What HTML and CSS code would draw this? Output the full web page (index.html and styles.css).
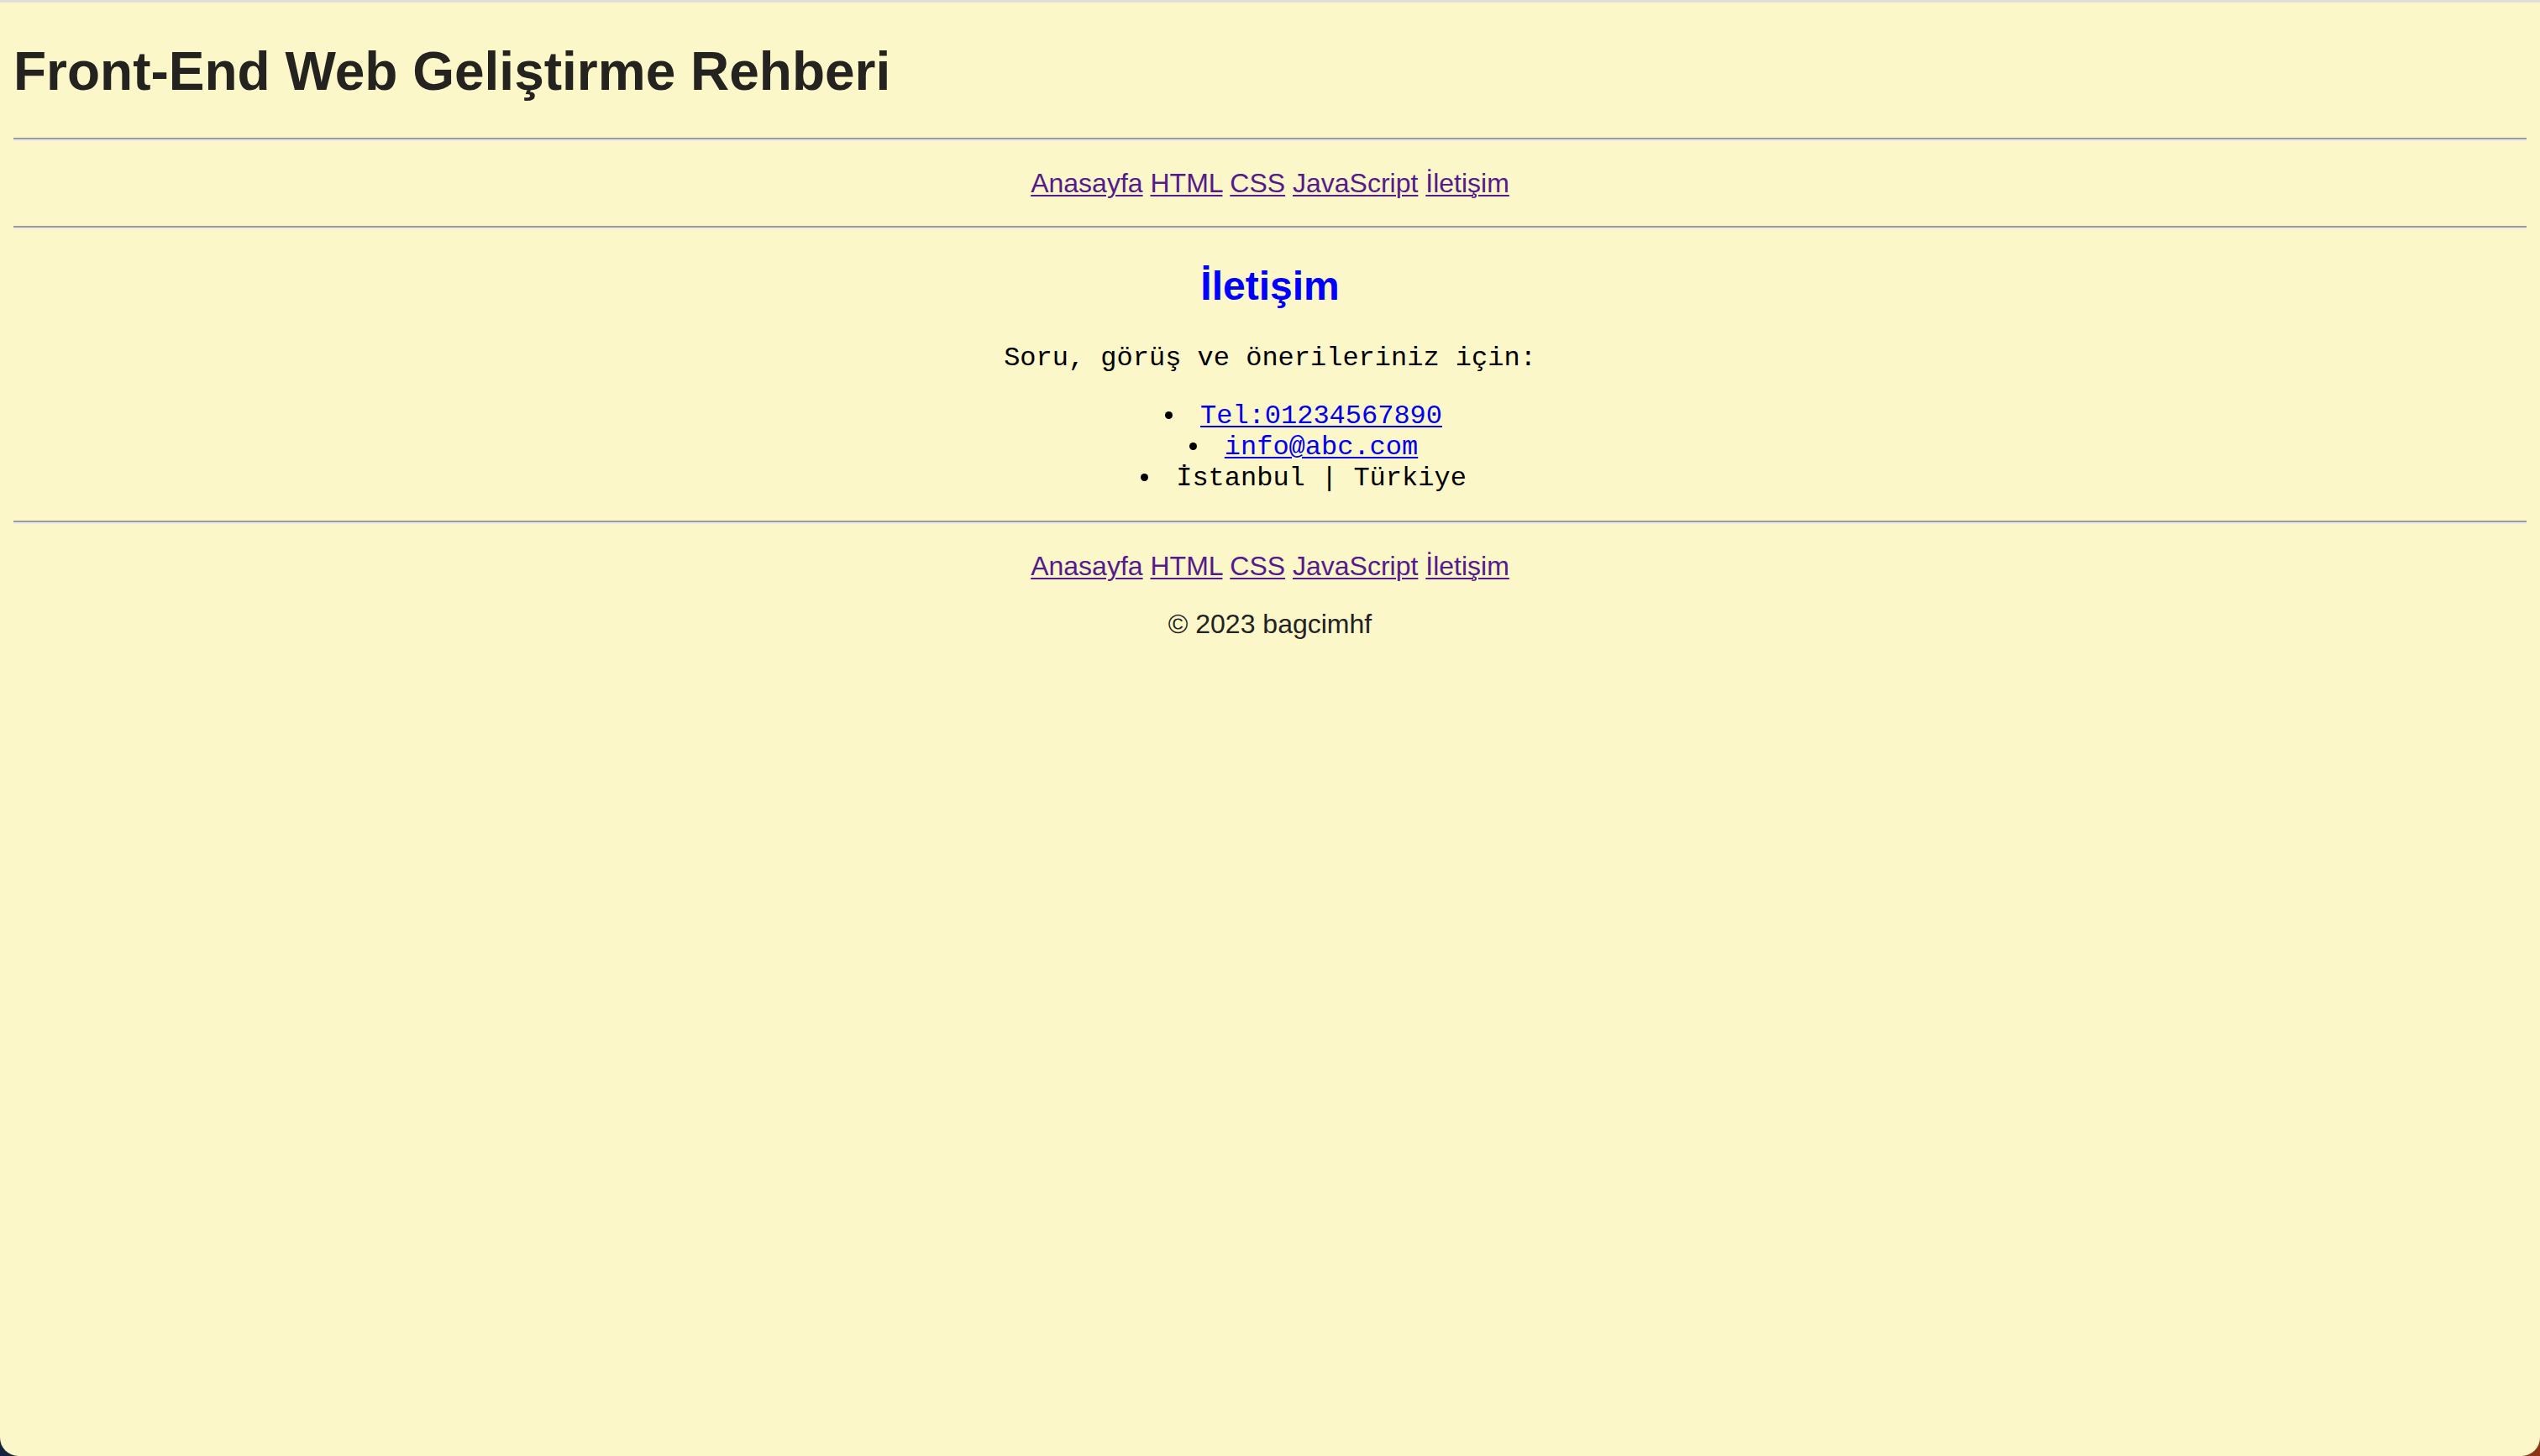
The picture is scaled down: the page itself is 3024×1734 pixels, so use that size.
FILE: index.html
```html
<!DOCTYPE html>
<html lang="tr">
<head>
<meta charset="utf-8">
<title>Front-End Web Geliştirme Rehberi</title>
<link rel="stylesheet" href="styles.css">
</head>
<body>
<div class="page">
  <header class="site-header">
    <h1 class="title">Front-End Web Geliştirme Rehberi</h1>
    <hr class="rule">
    <p class="nav"><a class="nav-link" href="#">Anasayfa</a> <a class="nav-link" href="#">HTML</a> <a class="nav-link" href="#">CSS</a> <a class="nav-link" href="#">JavaScript</a> <a class="nav-link" href="#">İletişim</a></p>
    <hr class="rule">
  </header>
  <main class="content">
    <h2 class="section-title">İletişim</h2>
    <p class="lead">Soru, görüş ve önerileriniz için:</p>
    <ul class="contact">
      <li class="contact-item"><a class="contact-link" href="#">Tel:01234567890</a></li>
      <li class="contact-item"><a class="contact-link" href="#">info@abc.com</a></li>
      <li class="contact-item">İstanbul | Türkiye</li>
    </ul>
  </main>
  <footer class="site-footer">
    <hr class="rule">
    <p class="nav"><a class="nav-link" href="#">Anasayfa</a> <a class="nav-link" href="#">HTML</a> <a class="nav-link" href="#">CSS</a> <a class="nav-link" href="#">JavaScript</a> <a class="nav-link" href="#">İletişim</a></p>
    <p class="copy">© 2023 bagcimhf</p>
  </footer>
</div>
</body>
</html>
```
FILE: styles.css
```css
html {
  height: 100%;
  background: linear-gradient(to right, #15233f 0%, #3a2f3a 50%, #8b3516 100%);
}
body {
  margin: 0;
  min-height: 100%;
  font-family: "Liberation Sans", Arial, Helvetica, sans-serif;
  font-size: 32px;
  color: #222;
}
.page {
  box-sizing: border-box;
  min-height: 100vh;
  background: #fcf7c9;
  border-top: 3px solid #dedede;
  border-radius: 0 0 22px 22px;
  padding: 0 16px 1px;
  overflow: hidden;
}
.title {
  font-size: 64px;
  font-weight: bold;
  margin: 45px 0 42px;
  color: #252320;
}
.rule {
  border: 0;
  height: 0;
  border-top: 2px solid #9b9b9b;
  border-bottom: 2px solid #ececec;
  margin: 16px 0;
}
.nav {
  text-align: center;
  margin: 32px 0;
}
.nav-link {
  color: #551a8b;
  text-decoration: underline;
  text-decoration-thickness: 2px;
  text-underline-offset: 3px;
}
.content {
  text-align: center;
}
.section-title {
  font-size: 48px;
  font-weight: bold;
  color: #0000ff;
  margin: 40px 0;
}
.lead {
  font-family: "Liberation Mono", "Courier New", monospace;
  font-size: 32px;
  color: #000;
  margin: 32px 0;
}
.contact {
  font-family: "Liberation Mono", "Courier New", monospace;
  font-size: 32px;
  color: #000;
  list-style: disc inside;
  margin: 32px 0;
  padding-left: 80px;
  line-height: 37px;
}
.contact-link {
  color: #0000ee;
  text-decoration-thickness: 2px;
  text-underline-offset: 3px;
}
.copy {
  text-align: center;
  margin: 32px 0;
  color: #222;
}
```
